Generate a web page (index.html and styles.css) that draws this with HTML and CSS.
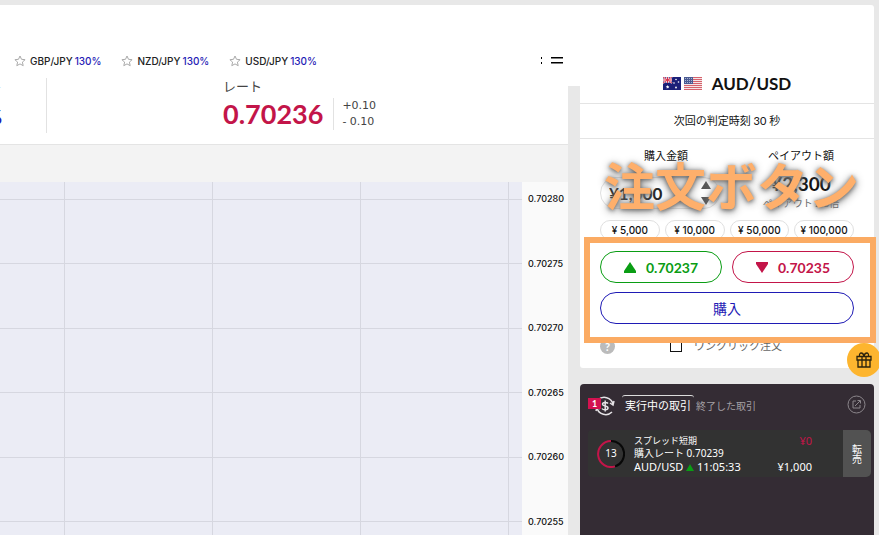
FILE: index.html
```html
<!DOCTYPE html>
<html lang="ja">
<head>
    <meta charset="UTF-8">
    <meta name="viewport" content="width=device-width, initial-scale=1.0">
    <title>AUD/USD</title>
    <link rel="stylesheet" href="styles.css">
</head>
<body>
    <div class="page">
        <main class="main">
            <nav class="pairs">
                <a class="pair" href="#"><svg class="star" viewBox="0 0 12 12"><path d="M6 1l1.5 3.3 3.6.4-2.7 2.4.8 3.6L6 8.9l-3.2 1.8.8-3.6L.9 4.7l3.6-.4z"/></svg>GBP/JPY <span class="percent">130%</span></a>
                <a class="pair" href="#"><svg class="star" viewBox="0 0 12 12"><path d="M6 1l1.5 3.3 3.6.4-2.7 2.4.8 3.6L6 8.9l-3.2 1.8.8-3.6L.9 4.7l3.6-.4z"/></svg>NZD/JPY <span class="percent">130%</span></a>
                <a class="pair" href="#"><svg class="star" viewBox="0 0 12 12"><path d="M6 1l1.5 3.3 3.6.4-2.7 2.4.8 3.6L6 8.9l-3.2 1.8.8-3.6L.9 4.7l3.6-.4z"/></svg>USD/JPY <span class="percent">130%</span></a>
                <button class="list-button" aria-label="一覧">
                    <svg width="24" height="12" viewBox="0 0 24 12"><path d="M2 2h1v2H2zM2 7h1v2H2zM12 2h12v1.500H12zM12 7h12v1.500H12z"/></svg>
                </button>
            </nav>

            <div class="stats">
                <div class="payout-rate">
                    <span class="stat-label">ペイアウト</span>
                    <span class="payout-percent">130%</span>
                </div>
                <div class="rate">
                    <span class="stat-label">レート</span>
                    <div class="rate-row">
                        <strong class="rate-value">0.70236</strong>
                        <div class="rate-diff"><span>+0.10</span><span>- 0.10</span></div>
                    </div>
                </div>
            </div>

            <div class="chart">
                <div class="plot">
                    <div class="line"></div>
                    <div class="line"></div>
                    <div class="line"></div>
                    <div class="line"></div>
                    <div class="line"></div>
                    <div class="line"></div>
                </div>
                <div class="axis">
                    <span>0.70280</span>
                    <span>0.70275</span>
                    <span>0.70270</span>
                    <span>0.70265</span>
                    <span>0.70260</span>
                    <span>0.70255</span>
                </div>
            </div>
        </main>

        <div class="gutter"></div>

        <aside class="side">
            <section class="order">
                <h1 class="symbol">
                    <!-- Australia -->
                    <svg class="flag" viewBox="0 0 18 13">
                        <rect width="18" height="13" fill="#1b1f78"/>
                        <path d="M0 0l9 6M9 0L0 6" stroke="#fff" stroke-width="1.6"/>
                        <path d="M4.5 0v6M0 3h9" stroke="#fff" stroke-width="2.4"/>
                        <path d="M4.5 0v6M0 3h9M0 0l9 6M9 0L0 6" stroke="#d8304c"/>
                        <path d="M4.5 8l.5 1.2 1.3-.2-.8 1 .6 1.2-1.3-.4-1 .9-.1-1.4-1.1-.7 1.3-.4z" fill="#fff"/>
                        <circle cx="13" cy="2.5" r=".8" fill="#fff"/>
                        <circle cx="11" cy="6" r=".8" fill="#fff"/>
                        <circle cx="15.5" cy="5" r=".8" fill="#fff"/>
                        <circle cx="13" cy="10.5" r=".9" fill="#fff"/>
                    </svg>
                    <!-- United States -->
                    <svg class="flag" viewBox="0 0 18 13">
                        <rect width="18" height="13" fill="#f6e4e6"/>
                        <path d="M0 .5h18M0 2.5h18M0 4.5h18M0 6.5h18M0 8.5h18M0 10.5h18M0 12.5h18" stroke="#d5626c"/>
                        <rect width="9" height="7" fill="#4a5b93"/>
                        <path d="M1 1.5h7M1 3.5h7M1 5.5h7" stroke="#a9b3d0" stroke-dasharray="1 1"/>
                    </svg>
                    <span class="symbol-name">AUD/USD</span>
                </h1>
                <p class="next-time">次回の判定時刻 30 秒</p>

                <form class="order-form">
                    <div class="fields">
                        <div class="amount">
                            <label class="field-label" for="amount">購入金額</label>
                            <div class="amount-box">
                                <input type="text" id="amount" class="amount-input" value="¥1,000">
                                <div class="steps">
                                    <button type="button" class="step" aria-label="増やす"><svg width="10" height="8" viewBox="0 0 10 8"><path d="M5 0l5 8H0z"/></svg></button>
                                    <button type="button" class="step" aria-label="減らす"><svg width="10" height="8" viewBox="0 0 10 8"><path d="M0 0h10L5 8z"/></svg></button>
                                </div>
                            </div>
                        </div>
                        <div class="payout">
                            <span class="field-label">ペイアウト額</span>
                            <strong class="payout-value">¥2,300</strong>
                            <span class="payout-note">ペイアウト 2.3倍</span>
                        </div>
                    </div>
                    <div class="chips">
                        <button type="button" class="chip">¥ 5,000</button>
                        <button type="button" class="chip">¥ 10,000</button>
                        <button type="button" class="chip">¥ 50,000</button>
                        <button type="button" class="chip">¥ 100,000</button>
                    </div>
                    <div class="choices">
                        <button type="button" class="choice high"><svg width="12" height="11" viewBox="0 0 12 11"><path d="M6 0l6 9v2H0V9z"/></svg>0.70237</button>
                        <button type="button" class="choice low"><svg width="12" height="11" viewBox="0 0 12 11"><path d="M0 0h12v2l-6 9-6-9z"/></svg>0.70235</button>
                    </div>
                    <button type="button" class="buy">購入</button>
                    <div class="one-click">
                        <span class="help">?</span>
                        <input type="checkbox" id="oneClick" class="check">
                        <label for="oneClick">ワンクリック注文</label>
                    </div>
                </form>

                <div class="note-frame"></div>
                <div class="note-text">注文ボタン</div>
            </section>

            <section class="trades">
                <div class="trades-head">
                    <div class="trades-icon">
                        <svg width="20" height="20" viewBox="0 0 20 20" fill="none" stroke="#e6e3e6" stroke-width="1.5">
                            <path d="M3 4a9 9 0 0 1 15 4M17 16A9 9 0 0 1 2 12"/>
                            <path d="M15 7l3 2 1-4M5 13l-3-2-1 4"/>
                            <path d="M13 7.500C12 6 7.500 6 7.500 8.200 7.500 10.500 13 9.500 13 12 13 14.300 8 14.300 7 12.500M10.200 4.500v11"/>
                        </svg>
                        <span class="badge">1</span>
                    </div>
                    <button class="tab active">実行中の取引</button>
                    <button class="tab">終了した取引</button>
                    <a class="external" href="#" aria-label="別画面で開く">
                        <svg width="19" height="19" viewBox="0 0 19 19" fill="none" stroke="#8b868b">
                            <circle cx="9.500" cy="9.500" r="8.500"/>
                            <path d="M9 6H6v7h7v-3M8 11l5-5M10.500 5.500H13.500V8.500"/>
                        </svg>
                    </a>
                </div>
                <div class="trade">
                    <div class="timer">
                        <svg class="ring" viewBox="0 0 28 28" fill="none" stroke-width="2">
                            <path d="M14 1a13 13 0 0 1 4 25.400" stroke="#080808"/>
                            <path d="M18 26.400A13 13 0 1 1 14 1" stroke="#c31549"/>
                        </svg>
                        <span class="seconds">13</span>
                    </div>
                    <div class="trade-info">
                        <span class="trade-name">スプレッド短期</span>
                        <span>購入レート 0.70239</span>
                        <span class="trade-time">AUD/USD <svg width="8" height="7" viewBox="0 0 8 7"><path d="M4 0l4 7H0z" fill="#0a9d14"/></svg> 11:05:33</span>
                    </div>
                    <div class="trade-money">
                        <span class="profit">¥0</span>
                        <span>¥1,000</span>
                    </div>
                    <button class="sell">転売</button>
                </div>
            </section>
        </aside>

        <button class="gift" aria-label="ギフト">
            <svg width="16" height="16" viewBox="0 0 16 16" fill="none" stroke="#2c230c" stroke-width="1.3">
                <path d="M1 4.500h14v3.500H1zM2 8v7h12V8M6 4.500V15M10 4.500V15M8 4C7 0 3 0 3.500 4M8 4c1-4 5-4 4.500 0"/>
            </svg>
        </button>
    </div>
</body>
</html>
```

FILE: styles.css
```css
* {
    box-sizing: border-box;
}

body {
    margin: 0;
    background-color: #e8e8e8;
    color: #111;
    font-family: Lato, "Noto Sans CJK JP", sans-serif;
    font-size: 12px;
    overflow: hidden;
}

button {
    font-family: inherit;
    padding: 0;
    border: 0;
    background: none;
    color: inherit;
    cursor: pointer;
}

.page {
    display: grid;
    grid-template-columns: 1fr 12px 294px;
    min-height: 100vh;
    padding: 5px 5px 0 0;
    position: relative;
}

.main {
    display: flex;
    flex-direction: column;
    background-color: #fff;
    min-width: 0;
}

/* joins the two white areas at the top */
.gutter {
    height: 81px;
    background-color: #fff;
}

.pairs {
    display: flex;
    align-items: center;
    gap: 20px;
    height: 73px;
    padding: 38px 5px 0 14px;
}

.pair {
    display: flex;
    align-items: center;
    gap: 2px;
    color: #222;
    font-family: Inter, sans-serif;
    font-size: 10px;
    font-weight: 500;
    text-decoration: none;
    white-space: nowrap;
}

.star {
    width: 12px;
    height: 12px;
    margin-right: 2px;
    fill: none;
    stroke: #aaa;
}

.percent {
    color: #1f1bb5;
    font-weight: 500;
}

.list-button {
    display: flex;
    margin-left: auto;
}

.stats {
    display: flex;
    height: 67px;
    border-bottom: 1px solid #e4e4e4;
}

.payout-rate {
    display: flex;
    flex-direction: column;
    align-items: flex-end;
    width: 47px;
    height: 55px;
    padding-right: 44px;
    border-right: 1px solid #e2e2e2;
    overflow: hidden;
}

.payout-percent {
    color: #1f1bb5;
    font-size: 18px;
    font-weight: bold;
    margin-top: 12px;
}

.stat-label {
    color: #444;
    font-size: 13px;
    line-height: 16px;
    white-space: nowrap;
}

.rate {
    margin-left: 176px;
}

.rate-row {
    display: flex;
    align-items: center;
    gap: 10px;
    margin-top: 4px;
}

.rate-value {
    color: #c31549;
    font-size: 27px;
    line-height: 32px;
}

.rate-diff {
    display: flex;
    flex-direction: column;
    padding-left: 8px;
    border-left: 1px solid #e2e2e2;
    color: #444;
    font-family: "DejaVu Sans", sans-serif;
    font-size: 11px;
    line-height: 16px;
}

.chart {
    display: flex;
    flex: 1;
    padding-top: 37px;
    background-color: #f3f3f3;
}

.plot,
.axis {
    display: flex;
    flex-direction: column;
    justify-content: space-between;
}

.plot {
    flex: 1;
    padding: 17px 0 13px;
    background-color: #ebecf5;
    background-image: linear-gradient(to right, #d6d7e0 1px, transparent 1px);
    background-size: 148px 100%;
    background-position: 64px 0;
}

.line {
    height: 1px;
    background-color: #d6d7e0;
}

.axis {
    width: 46px;
    padding: 9px 0 5px 6px;
    background-color: #fafafa;
    font-family: Inter, sans-serif;
    font-size: 9px;
    font-weight: 500;
    line-height: 16px;
}

.side {
    display: flex;
    flex-direction: column;
    gap: 16px;
}

.order {
    position: relative;
    background-color: #fff;
    border-radius: 0 3px 3px 3px;
}

.symbol {
    display: flex;
    justify-content: center;
    align-items: center;
    gap: 3px;
    height: 99px;
    margin: 0;
    padding-top: 59px;
    border-bottom: 1px solid #e4e4e4;
    font-size: 17px;
}

.flag {
    width: 18px;
    height: 13px;
}

.symbol-name {
    margin-left: 7px;
}

.next-time {
    margin: 0;
    border-bottom: 1px solid #e4e4e4;
    font-size: 11px;
    line-height: 34px;
    text-align: center;
}

.order-form {
    padding: 9px 20px 12px;
}

.fields {
    display: flex;
    justify-content: space-between;
    height: 66px;
}

.field-label {
    font-size: 11px;
    line-height: 16px;
    text-align: center;
}

.amount {
    display: flex;
    flex-direction: column;
    width: 120px;
    gap: 13px;
}

.field-label[for] {
    padding-left: 12px;
}

.amount-box {
    display: flex;
    align-items: center;
    height: 32px;
    padding: 0 8px;
    border: 1px solid #e0e0e0;
    border-radius: 16px;
}

.amount-input {
    flex: 1;
    min-width: 0;
    padding: 0;
    border: 0;
    background: none;
    color: #222;
    font-family: Lato, sans-serif;
    font-size: 17px;
    font-weight: bold;
}

.steps {
    display: flex;
    flex-direction: column;
    gap: 8px;
}

.step {
    display: flex;
    fill: #555;
}

.payout {
    display: flex;
    flex-direction: column;
    align-items: center;
    width: 106px;
}

.payout-value {
    margin-top: 9px;
    font-size: 19px;
    line-height: 22px;
}

.payout-note {
    color: #666;
    font-size: 10px;
    line-height: 16px;
}

.chips {
    display: flex;
    gap: 5px;
    height: 20px;
    margin-top: 6px;
}

.chip {
    flex: 1;
    border: 1px solid #e0e0e0;
    border-radius: 10px;
    font-family: Inter, sans-serif;
    font-size: 10px;
    font-weight: 500;
    white-space: nowrap;
}

.choices {
    display: flex;
    gap: 10px;
    margin-top: 11px;
}

.choice,
.buy {
    height: 32px;
    border: 1px solid;
    border-radius: 16px;
    font-size: 14px;
}

.choice {
    display: flex;
    flex: 1;
    justify-content: center;
    align-items: center;
    gap: 10px;
    font-weight: bold;
    fill: currentColor;
}

.high {
    color: #0a9d14;
}

.low {
    color: #c31549;
}

.buy {
    display: block;
    width: 100%;
    margin-top: 9px;
    color: #1f1bb5;
}

.one-click {
    display: flex;
    align-items: center;
    margin-top: 12px;
    color: #666;
    font-size: 11px;
    line-height: 20px;
}

.help {
    width: 15px;
    height: 15px;
    border-radius: 50%;
    background-color: #bbb;
    color: #fff;
    font-size: 11px;
    font-weight: bold;
    line-height: 15px;
    text-align: center;
}

.check {
    appearance: none;
    width: 12px;
    height: 12px;
    margin: 0 12px 0 55px;
    border: 1px solid #111;
}

/* highlight over the order buttons */
.note-frame {
    position: absolute;
    top: 232px;
    right: -2px;
    bottom: 25px;
    left: 4px;
    border: 6px solid #fbab63;
    pointer-events: none;
}

.note-text {
    position: absolute;
    top: 153px;
    left: 24px;
    color: #feaf6b;
    font-family: "Noto Sans CJK JP", sans-serif;
    font-size: 51px;
    font-weight: bold;
    line-height: 52px;
    text-shadow: 0 1px 4px #666, 0 2px 10px #888;
    white-space: nowrap;
    pointer-events: none;
}

.trades {
    flex: 1;
    padding: 11px 3px 0 8px;
    border-radius: 4px 4px 0 0;
    background-color: #342c34;
    color: #fff;
}

.trades-head {
    display: flex;
    align-items: flex-start;
    height: 35px;
    padding-right: 5px;
}

.trades-icon {
    position: relative;
    width: 34px;
    padding: 1px 0 0 7px;
}

.badge {
    position: absolute;
    top: 3px;
    left: 0;
    width: 13px;
    height: 11px;
    background-color: #d31250;
    font-size: 9px;
    font-weight: bold;
    line-height: 11px;
    text-align: center;
}

.tab {
    height: 20px;
    margin-right: 2px;
    border-top: 1px solid transparent;
    color: #a39fa3;
    font-size: 10px;
    line-height: 18px;
}

.tab.active {
    padding: 0 3px;
    border-color: #ddd;
    border-radius: 3px;
    color: #fff;
    font-size: 11px;
}

.external {
    display: flex;
    margin-left: auto;
}

.trade {
    display: flex;
    height: 47px;
    border-radius: 4px;
    background-color: #323232;
    font-family: "Noto Sans", "Noto Sans CJK JP", sans-serif;
    font-size: 11px;
    line-height: 13px;
}

.timer {
    display: grid;
    place-items: center;
    width: 46px;
}

.ring,
.seconds {
    grid-area: 1 / 1;
}

.ring {
    width: 28px;
    height: 28px;
}

.seconds {
    font-size: 10px;
}

.trade-info {
    display: flex;
    flex-direction: column;
    padding-top: 4px;
    font-size: 10px;
    white-space: nowrap;
}

.trade-name {
    font-size: 9px;
}

.trade-time {
    font-size: 11px;
}

.trade-money {
    display: flex;
    flex-direction: column;
    justify-content: space-between;
    align-items: flex-end;
    margin-left: auto;
    padding: 4px 31px 4px 0;
}

.profit {
    color: #c31549;
}

.sell {
    width: 28px;
    border-radius: 0 5px 5px 0;
    background-color: #525252;
    font-size: 10px;
    writing-mode: vertical-rl;
    text-align: center;
}

.gift {
    position: absolute;
    top: 343px;
    right: -2px;
    display: grid;
    place-items: center;
    width: 34px;
    height: 34px;
    border-radius: 50%;
    background-color: #fdb52f;
}
```
